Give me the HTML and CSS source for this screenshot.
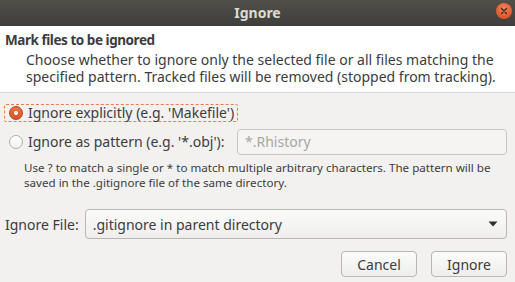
FILE: index.html
```html
<!DOCTYPE html>
<html>
<head>
<meta charset="utf-8">
<link rel="stylesheet" href="styles.css">
</head>
<body>
<div class="window">
  <header class="titlebar">
    <span class="title">Ignore</span>
    <span class="close"><svg width="16" height="16" viewBox="0 0 16 16"><path d="M5.5 5.5 L10.5 10.5 M10.5 5.5 L5.5 10.5" stroke="#3a2a22" stroke-width="1.4" stroke-linecap="round"/></svg></span>
  </header>
  <section class="intro">
    <h1 class="intro-title">Mark files to be ignored</h1>
    <p class="intro-text">Choose whether to ignore only the selected file or all files matching the specified pattern. Tracked files will be removed (stopped from tracking).</p>
  </section>
  <main class="content">
    <div class="opt-row">
      <label class="opt focus"><span class="radio checked"></span><span>Ignore explicitly (e.g. 'Makefile')</span></label>
    </div>
    <div class="opt-row pattern-row">
      <label class="opt"><span class="radio"></span><span>Ignore as pattern (e.g. '*.obj'):</span></label>
      <div class="entry">*.Rhistory</div>
    </div>
    <p class="help">Use ? to match a single or * to match multiple arbitrary characters. The pattern will be saved in the .gitignore file of the same directory.</p>
    <div class="file-row">
      <span class="file-label">Ignore File:</span>
      <div class="combo"><span>.gitignore in parent directory</span><svg width="10" height="6" viewBox="0 0 10 6"><path d="M0.5 0.5 H9.5 L5 5.5 Z" fill="#2e2e2e"/></svg></div>
    </div>
    <div class="buttons">
      <button class="btn">Cancel</button>
      <button class="btn">Ignore</button>
    </div>
  </main>
</div>
</body>
</html>
```
FILE: styles.css
```css
* { box-sizing: border-box; }
html, body { margin: 0; padding: 0; }
body {
  width: 515px;
  height: 282px;
  overflow: hidden;
  background: #f2f1f0;
  font-family: "Noto Sans", "DejaVu Sans", sans-serif;
  color: #3c3c3c;
}
.window { width: 515px; height: 282px; display: flex; flex-direction: column; }
.titlebar {
  height: 26px;
  flex: none;
  background: linear-gradient(to bottom, #514f4a, #3f3e3a);
  display: flex;
  align-items: center;
  justify-content: center;
  position: relative;
}
.title {
  color: #dfdbd2;
  font-weight: bold;
  font-size: 14px;
  line-height: 16px;
}
.close {
  position: absolute;
  right: 3px;
  top: 3px;
  width: 16px;
  height: 16px;
  border-radius: 50%;
  background: radial-gradient(circle at 50% 35%, #f5845a, #e0552a 70%, #c9461f);
  display: flex;
}
.intro {
  background: #ffffff;
  height: 67px;
  flex: none;
  border-bottom: 1px solid #d9d8d6;
  padding: 5px 5px 0 5px;
}
.intro-title {
  margin: 0;
  font-size: 13.5px;
  letter-spacing: -0.45px;
  font-weight: bold;
  line-height: 18px;
}
.intro-text {
  margin: 2px 0 0 21px;
  font-size: 14px;
  line-height: 17px;
}
.content {
  padding: 11px 8px 0 4px;
  display: flex;
  flex-direction: column;
}
.opt-row { display: flex; align-items: center; }
.opt {
  display: flex;
  align-items: center;
  gap: 5px;
  font-size: 14px;
  line-height: 16px;
  height: 18px;
  padding: 0 3px 0 4px;
  border: 1px dashed transparent;
}
.opt.focus { border-color: #ee7a4f; border-radius: 2px; }
.radio {
  width: 14px;
  height: 14px;
  border-radius: 50%;
  border: 1px solid #b3b0ab;
  background: linear-gradient(#ffffff, #f1f0ef);
  flex: none;
  position: relative;
}
.radio.checked {
  border-color: #b4441c;
  background: linear-gradient(#ec7447, #d55526);
}
.radio.checked::after {
  content: "";
  position: absolute;
  left: 4px;
  top: 4px;
  width: 4px;
  height: 4px;
  border-radius: 50%;
  background: #ffffff;
}
.pattern-row { margin-top: 7px; justify-content: space-between; }
.entry {
  width: 270px;
  height: 26px;
  border: 1px solid #c8c6c3;
  border-radius: 4px;
  background: #f5f4f3;
  color: #a7a6a4;
  font-size: 14px;
  line-height: 24px;
  padding-left: 7px;
}
.help {
  margin: 5px 0 0 20px;
  font-size: 11.6px;
  line-height: 15px;
}
.file-row {
  margin-top: 19px;
  display: flex;
  align-items: center;
  gap: 6px;
  padding-left: 1px;
}
.file-label { font-size: 14px; }
.combo {
  flex: 1;
  height: 30px;
  border: 1px solid #b9b7b3;
  border-radius: 4px;
  background: linear-gradient(#fbfbfa, #efeeec);
  display: flex;
  align-items: center;
  justify-content: space-between;
  padding: 0 8px 0 7px;
  font-size: 14px;
}
.buttons {
  margin-top: 12px;
  display: flex;
  justify-content: flex-end;
  gap: 14px;
}
.btn {
  width: 76px;
  height: 26px;
  border: 1px solid #b9b7b3;
  border-radius: 4px;
  background: linear-gradient(#fbfbfa, #efeeec);
  font-family: inherit;
  font-size: 14px;
  color: #3c3c3c;
  padding: 0;
}
```
